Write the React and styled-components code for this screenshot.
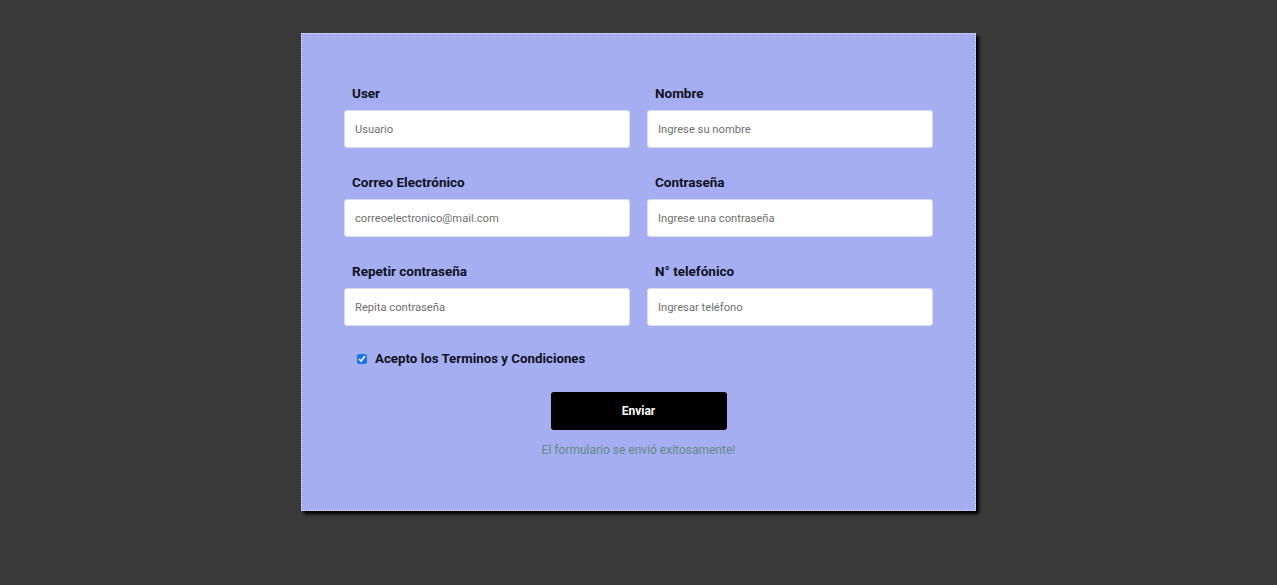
import styled, { createGlobalStyle } from "styled-components";

const GlobalStyle = createGlobalStyle`
  html, body {
    margin: 0;
    padding: 0;
    background: #3a3a3a;
    font-family: Roboto, "Liberation Sans", sans-serif;
  }
  * {
    box-sizing: border-box;
  }
`;

const Page = styled.div`
  min-height: 585px;
  padding-top: 33px;
  display: flex;
  justify-content: center;
  align-items: flex-start;
`;

const Card = styled.form`
  width: 675px;
  height: 478px;
  background-color: #a4aef1;
  border: 1px dotted #dfe2fb;
  box-shadow: 3px 3px 3px #000;
  padding: 51px 42px 0 42px;
  display: flex;
  flex-direction: column;
`;

const Grid = styled.div`
  display: grid;
  grid-template-columns: 286px 286px;
  column-gap: 17px;
  row-gap: 26px;
`;

const Field = styled.div`
  display: flex;
  flex-direction: column;
`;

const Label = styled.label`
  font-size: 13.5px;
  font-weight: 700;
  color: #111122;
  line-height: 16px;
  margin: 0 0 9px 8px;
`;

const Input = styled.input`
  height: 38px;
  width: 100%;
  border: 1px solid #d8dbf3;
  border-radius: 3px;
  background: #fff;
  padding: 0 10px;
  font-family: Roboto, "Liberation Sans", sans-serif;
  font-size: 11.2px;
  color: #333;
  outline: none;

  &::placeholder {
    color: #6f6f6f;
  }
`;

const CheckRow = styled.label`
  display: flex;
  align-items: center;
  gap: 8px;
  margin: 25px 0 0 13px;
  font-size: 13.3px;
  font-weight: 700;
  color: #111122;
  line-height: 16px;
`;

const Check = styled.input`
  width: 10px;
  height: 10px;
  margin: 0;
  accent-color: #1a73e8;
`;

const Actions = styled.div`
  display: flex;
  flex-direction: column;
  align-items: center;
  margin-top: 25px;
`;

const Button = styled.button`
  width: 176px;
  height: 38px;
  background: #000;
  color: #fff;
  border: none;
  border-radius: 3px;
  font-family: Roboto, "Liberation Sans", sans-serif;
  font-weight: 700;
  font-size: 12px;
  cursor: pointer;
`;

const Message = styled.p`
  margin: 12px 0 0 0;
  font-size: 12px;
  line-height: 16px;
  color: #5f8c84;
`;

const fields = [
  { label: "User", placeholder: "Usuario", type: "text" },
  { label: "Nombre", placeholder: "Ingrese su nombre", type: "text" },
  { label: "Correo Electrónico", placeholder: "correoelectronico@mail.com", type: "email" },
  { label: "Contraseña", placeholder: "Ingrese una contraseña", type: "password" },
  { label: "Repetir contraseña", placeholder: "Repita contraseña", type: "password" },
  { label: "N° telefónico", placeholder: "Ingresar teléfono", type: "tel" },
];

const App = () => {
  return (
    <>
      <GlobalStyle />
      <Page>
        <Card onSubmit={(e) => e.preventDefault()}>
          <Grid>
            {fields.map((f) => (
              <Field key={f.label}>
                <Label>{f.label}</Label>
                <Input type={f.type} placeholder={f.placeholder} />
              </Field>
            ))}
          </Grid>
          <CheckRow>
            <Check type="checkbox" defaultChecked />
            Acepto los Terminos y Condiciones
          </CheckRow>
          <Actions>
            <Button type="submit">Enviar</Button>
            <Message>El formulario se envió exitosamente!</Message>
          </Actions>
        </Card>
      </Page>
    </>
  );
};

export default App;
